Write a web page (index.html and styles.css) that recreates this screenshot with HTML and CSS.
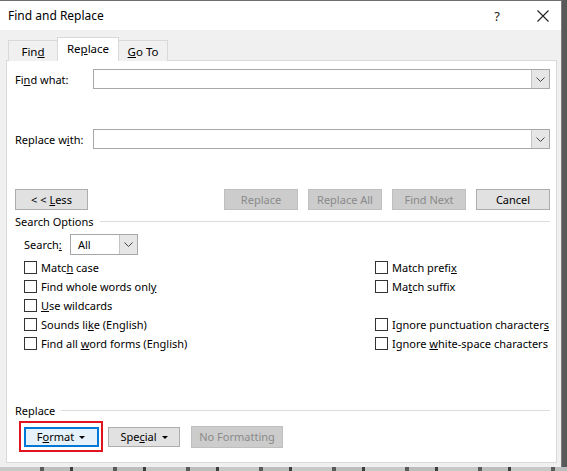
FILE: index.html
```html
<!DOCTYPE html>
<html>
<head>
<meta charset="utf-8">
<link rel="stylesheet" href="styles.css">
</head>
<body>
<div class="screen">
  <div class="dialog">
    <div class="titlebar">
      <span class="title">Find and Replace</span>
      <span class="tb-help">?</span>
      <span class="tb-close">
        <svg width="12" height="12" viewBox="0 0 12 12"><path d="M0.5 0.5 L11.5 11.5 M11.5 0.5 L0.5 11.5" stroke="#222" stroke-width="1.1" fill="none"/></svg>
      </span>
    </div>
    <div class="body">
      <div class="tabs">
        <div class="tab"><span>Fin<u>d</u></span></div>
        <div class="tab active"><span>Re<u>p</u>lace</span></div>
        <div class="tab"><span><u>G</u>o To</span></div>
      </div>
      <div class="panel">
        <div class="field-row">
          <label class="field-label">Fi<u>n</u>d what:</label>
          <div class="combo wide"><span class="combo-text"></span><span class="combo-btn"><svg width="9" height="5" viewBox="0 0 9 5"><path d="M0.5 0.5 L4.5 4.5 L8.5 0.5" stroke="#444" fill="none"/></svg></span></div>
        </div>
        <div class="field-row second">
          <label class="field-label">Replace w<u>i</u>th:</label>
          <div class="combo wide"><span class="combo-text"></span><span class="combo-btn"><svg width="9" height="5" viewBox="0 0 9 5"><path d="M0.5 0.5 L4.5 4.5 L8.5 0.5" stroke="#444" fill="none"/></svg></span></div>
        </div>
        <div class="button-row">
          <button class="btn less"><span>&lt; &lt; <u>L</u>ess</span></button>
          <div class="spacer"></div>
          <button class="btn disabled"><span>Replace</span></button>
          <button class="btn disabled"><span>Replace All</span></button>
          <button class="btn disabled"><span>Find Next</span></button>
          <button class="btn"><span>Cancel</span></button>
        </div>
        <div class="group-head"><span>Search Options</span><div class="rule"></div></div>
        <div class="search-row">
          <label class="search-label">Search<u>:</u></label>
          <div class="combo small"><span class="combo-text">All</span><span class="combo-btn"><svg width="9" height="5" viewBox="0 0 9 5"><path d="M0.5 0.5 L4.5 4.5 L8.5 0.5" stroke="#444" fill="none"/></svg></span></div>
        </div>
        <div class="options">
          <div class="col left">
            <div class="check"><span class="box"></span><span>Matc<u>h</u> case</span></div>
            <div class="check"><span class="box"></span><span>Find whole words onl<u>y</u></span></div>
            <div class="check"><span class="box"></span><span><u>U</u>se wildcards</span></div>
            <div class="check"><span class="box"></span><span>Sounds li<u>k</u>e (English)</span></div>
            <div class="check"><span class="box"></span><span>Find all <u>w</u>ord forms (English)</span></div>
          </div>
          <div class="col right">
            <div class="check"><span class="box"></span><span>Match prefi<u>x</u></span></div>
            <div class="check"><span class="box"></span><span>Ma<u>t</u>ch suffix</span></div>
            <div class="check empty"></div>
            <div class="check"><span class="box"></span><span>Ignore punctuation character<u>s</u></span></div>
            <div class="check"><span class="box"></span><span>Ignore <u>w</u>hite-space characters</span></div>
          </div>
        </div>
        <div class="group-head replace-head"><span>Replace</span><div class="rule"></div></div>
        <div class="format-row">
          <div class="highlight"><button class="btn fmt"><span>F<u>o</u>rmat</span><span class="caret"></span></button></div>
          <button class="btn special"><span>Spe<u>c</u>ial</span><span class="caret"></span></button>
          <button class="btn disabled noformat"><span>No Formatting</span></button>
        </div>
      </div>
    </div>
  </div>
  <div class="behind"></div>
</div>
</body>
</html>
```
FILE: styles.css
```css
html, body {
  margin: 0;
  padding: 0;
}
body {
  width: 567px;
  height: 471px;
  overflow: hidden;
  font-family: "Noto Sans", "Open Sans", sans-serif;
  font-size: 11px;
  color: #000;
  background: #6b6b6b;
}
u {
  text-decoration: underline;
  text-underline-offset: 1px;
}
.screen {
  width: 567px;
  height: 471px;
  display: flex;
  flex-direction: column;
  background: #595959;
}
.dialog {
  width: 561px;
  height: 466px;
  border-top: 1px solid #6e6e6e;
  border-right: 1px solid #7d7d7d;
  background: #f0f0f0;
  display: flex;
  flex-direction: column;
  box-sizing: content-box;
}
.behind {
  flex: 1;
  background: repeating-linear-gradient(90deg, #c8c8c8 0 40px, #5a5a5a 40px 44px, #bdbdbd 44px 70px, #3e3e3e 70px 73px);
}
.titlebar {
  height: 29px;
  background: #fff;
  display: flex;
  align-items: center;
  padding-left: 8px;
  font-size: 12px;
}
.title {
  flex: 1;
  margin-top: -1px;
}
.tb-help {
  font-size: 13px;
  width: 46px;
  text-align: center;
  color: #222;
}
.tb-close {
  width: 46px;
  display: flex;
  justify-content: center;
  margin-right: -5px;
}
.body {
  flex: 1;
  display: flex;
  flex-direction: column;
  padding: 7px 4px 4px 6px;
}
.tabs {
  display: flex;
  align-items: flex-end;
  padding-left: 2px;
  height: 24px;
  margin-bottom: -1px;
  position: relative;
  z-index: 1;
}
.tab {
  height: 21px;
  border: 1px solid #d9d9d9;
  border-bottom: none;
  background: #f0f0f0;
  display: flex;
  align-items: center;
  justify-content: center;
  font-size: 11.5px;
  box-sizing: border-box;
  width: 50px;
  margin-left: -1px;
}
.tab:first-child { margin-left: 0; }
.tab.active {
  height: 24px;
  width: 62px;
  background: #fff;
  padding-bottom: 2px;
}
.panel {
  flex: 1;
  background: #fff;
  border: 1px solid #d9d9d9;
  padding: 8px 6px 0 8px;
  display: flex;
  flex-direction: column;
}
.field-row {
  display: flex;
  align-items: center;
  height: 20px;
}
.field-row.second {
  margin-top: 40px;
}
.field-label {
  width: 78px;
}
.combo {
  height: 20px;
  border: 1px solid #a7a7a7;
  box-sizing: border-box;
  display: flex;
  background: #fff;
}
.combo.wide {
  width: 458px;
}
.combo-text {
  flex: 1;
  padding-left: 7px;
  line-height: 19px;
}
.combo-btn {
  width: 17px;
  background: #e6e6e6;
  border-left: 1px solid #c4c4c4;
  display: flex;
  align-items: center;
  justify-content: center;
}
.button-row {
  display: flex;
  margin-top: 40px;
  gap: 10px;
}
.spacer { flex: 1; }
.btn {
  font-family: inherit;
  font-size: 11px;
  height: 21px;
  width: 74px;
  background: #e1e1e1;
  border: 1px solid #adadad;
  padding: 0;
  color: #000;
  display: flex;
  align-items: center;
  justify-content: center;
  gap: 5px;
}
.btn.less { width: 73px; }
.btn.disabled {
  background: #cccccc;
  border-color: #bfbfbf;
  color: #8a8a8a;
}
.group-head {
  display: flex;
  align-items: center;
  margin-top: 3px;
  height: 16px;
  gap: 6px;
}
.rule {
  flex: 1;
  height: 1px;
  background: #dcdcdc;
  margin-top: 1px;
}
.search-row {
  display: flex;
  align-items: center;
  margin-top: 5px;
  padding-left: 9px;
  height: 21px;
}
.search-label { width: 46px; }
.combo.small {
  width: 68px;
  height: 21px;
}
.options {
  display: flex;
  margin-top: 3px;
  padding-left: 9px;
}
.col.left { width: 351px; }
.check {
  height: 19px;
  display: flex;
  align-items: center;
}
.box {
  width: 13px;
  height: 13px;
  box-sizing: border-box;
  border: 1px solid #333;
  background: #fff;
  margin-right: 4px;
  flex: none;
}
.replace-head {
  margin-top: 49px;
}
.format-row {
  display: flex;
  align-items: center;
  margin-top: 3px;
  height: 31px;
}
.highlight {
  width: 84px;
  height: 31px;
  border: 2px solid #e0141e;
  box-sizing: border-box;
  display: flex;
  align-items: center;
  justify-content: center;
  margin-left: 4px;
}
.btn.fmt {
  width: 75px;
  height: 20px;
  background: #e5f1fb;
  border: 2px solid #0078d7;
}
.caret {
  width: 0;
  height: 0;
  border-left: 3px solid transparent;
  border-right: 3px solid transparent;
  border-top: 3px solid #000;
  margin-top: 1px;
}
.btn.special {
  margin-left: 5px;
  width: 72px;
  height: 20px;
}
.btn.noformat {
  margin-left: 11px;
  width: 92px;
  height: 22px;
}
```
